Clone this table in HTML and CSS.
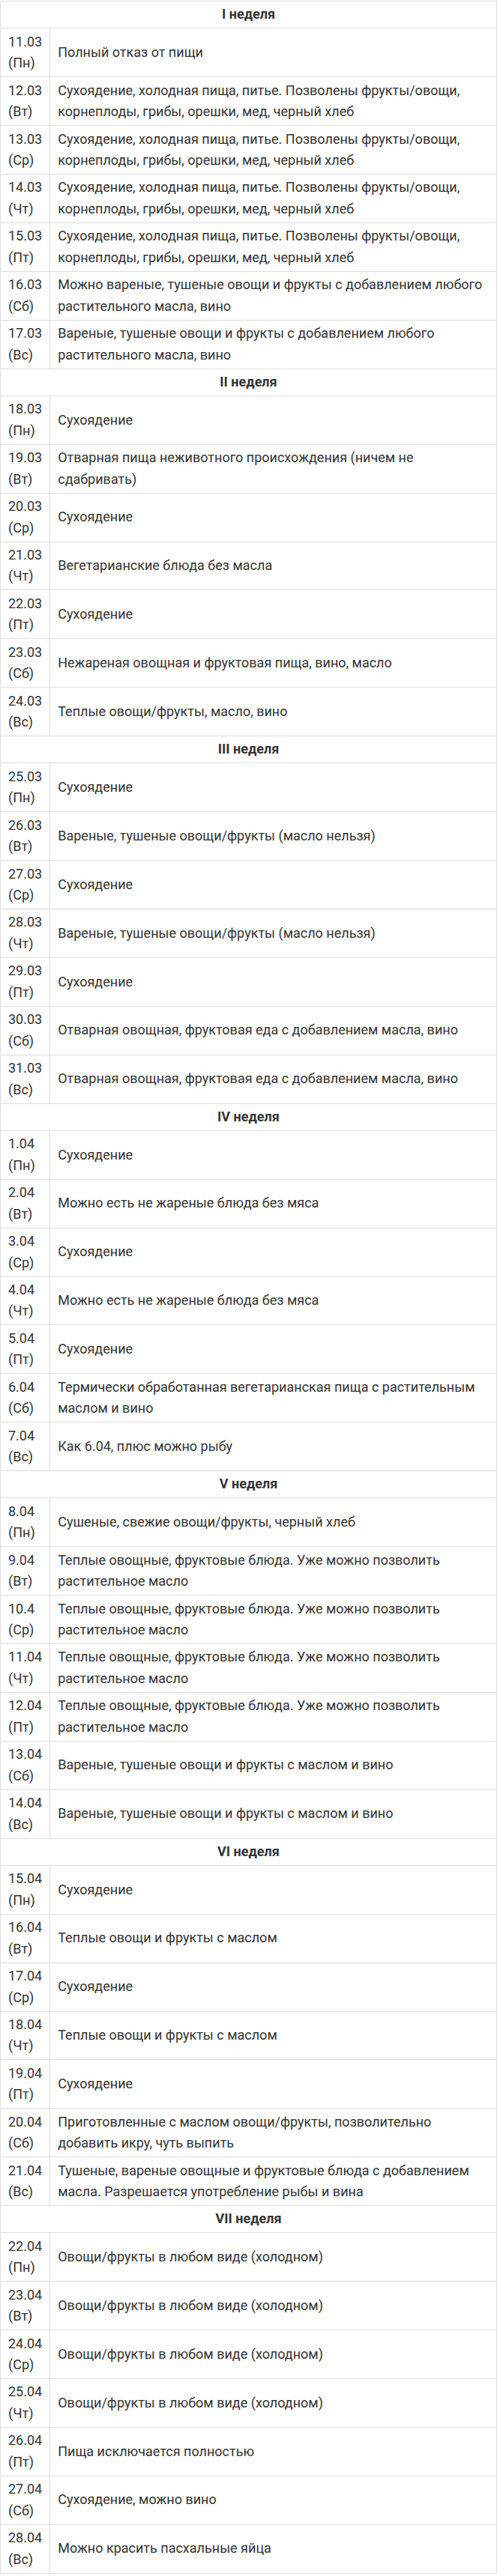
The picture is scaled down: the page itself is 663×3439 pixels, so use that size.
FILE: index.html
```html
<!DOCTYPE html>
<html lang="ru">
<head>
<meta charset="utf-8">
<title>Календарь питания</title>
<link rel="stylesheet" href="styles.css">
</head>
<body>
<table class="diet">
<tbody>
<tr class="week"><th colspan="2">I неделя</th></tr>
<tr><td class="date">11.03<br>(Пн)</td><td class="text">Полный отказ от пищи</td></tr>
<tr><td class="date">12.03<br>(Вт)</td><td class="text">Сухоядение, холодная пища, питье. Позволены фрукты/овощи, корнеплоды, грибы, орешки, мед, черный хлеб</td></tr>
<tr><td class="date">13.03<br>(Ср)</td><td class="text">Сухоядение, холодная пища, питье. Позволены фрукты/овощи, корнеплоды, грибы, орешки, мед, черный хлеб</td></tr>
<tr><td class="date">14.03<br>(Чт)</td><td class="text">Сухоядение, холодная пища, питье. Позволены фрукты/овощи, корнеплоды, грибы, орешки, мед, черный хлеб</td></tr>
<tr><td class="date">15.03<br>(Пт)</td><td class="text">Сухоядение, холодная пища, питье. Позволены фрукты/овощи, корнеплоды, грибы, орешки, мед, черный хлеб</td></tr>
<tr><td class="date">16.03<br>(Сб)</td><td class="text">Можно вареные, тушеные овощи и фрукты с добавлением любого растительного масла, вино</td></tr>
<tr><td class="date">17.03<br>(Вс)</td><td class="text">Вареные, тушеные овощи и фрукты с добавлением любого растительного масла, вино</td></tr>

<tr class="week"><th colspan="2">II неделя</th></tr>
<tr><td class="date">18.03<br>(Пн)</td><td class="text">Сухоядение</td></tr>
<tr><td class="date">19.03<br>(Вт)</td><td class="text">Отварная пища неживотного происхождения (ничем не сдабривать)</td></tr>
<tr><td class="date">20.03<br>(Ср)</td><td class="text">Сухоядение</td></tr>
<tr><td class="date">21.03<br>(Чт)</td><td class="text">Вегетарианские блюда без масла</td></tr>
<tr><td class="date">22.03<br>(Пт)</td><td class="text">Сухоядение</td></tr>
<tr><td class="date">23.03<br>(Сб)</td><td class="text">Нежареная овощная и фруктовая пища, вино, масло</td></tr>
<tr><td class="date">24.03<br>(Вс)</td><td class="text">Теплые овощи/фрукты, масло, вино</td></tr>

<tr class="week"><th colspan="2">III неделя</th></tr>
<tr><td class="date">25.03<br>(Пн)</td><td class="text">Сухоядение</td></tr>
<tr><td class="date">26.03<br>(Вт)</td><td class="text">Вареные, тушеные овощи/фрукты (масло нельзя)</td></tr>
<tr><td class="date">27.03<br>(Ср)</td><td class="text">Сухоядение</td></tr>
<tr><td class="date">28.03<br>(Чт)</td><td class="text">Вареные, тушеные овощи/фрукты (масло нельзя)</td></tr>
<tr><td class="date">29.03<br>(Пт)</td><td class="text">Сухоядение</td></tr>
<tr><td class="date">30.03<br>(Сб)</td><td class="text">Отварная овощная, фруктовая еда с добавлением масла, вино</td></tr>
<tr><td class="date">31.03<br>(Вс)</td><td class="text">Отварная овощная, фруктовая еда с добавлением масла, вино</td></tr>

<tr class="week"><th colspan="2">IV неделя</th></tr>
<tr><td class="date">1.04<br>(Пн)</td><td class="text">Сухоядение</td></tr>
<tr><td class="date">2.04<br>(Вт)</td><td class="text">Можно есть не жареные блюда без мяса</td></tr>
<tr><td class="date">3.04<br>(Ср)</td><td class="text">Сухоядение</td></tr>
<tr><td class="date">4.04<br>(Чт)</td><td class="text">Можно есть не жареные блюда без мяса</td></tr>
<tr><td class="date">5.04<br>(Пт)</td><td class="text">Сухоядение</td></tr>
<tr><td class="date">6.04<br>(Сб)</td><td class="text">Термически обработанная вегетарианская пища с растительным маслом и вино</td></tr>
<tr><td class="date">7.04<br>(Вс)</td><td class="text">Как 6.04, плюс можно рыбу</td></tr>

<tr class="week"><th colspan="2">V неделя</th></tr>
<tr><td class="date">8.04<br>(Пн)</td><td class="text">Сушеные, свежие овощи/фрукты, черный хлеб</td></tr>
<tr><td class="date">9.04<br>(Вт)</td><td class="text">Теплые овощные, фруктовые блюда. Уже можно позволить растительное масло</td></tr>
<tr><td class="date">10.4<br>(Ср)</td><td class="text">Теплые овощные, фруктовые блюда. Уже можно позволить растительное масло</td></tr>
<tr><td class="date">11.04<br>(Чт)</td><td class="text">Теплые овощные, фруктовые блюда. Уже можно позволить растительное масло</td></tr>
<tr><td class="date">12.04<br>(Пт)</td><td class="text">Теплые овощные, фруктовые блюда. Уже можно позволить растительное масло</td></tr>
<tr><td class="date">13.04<br>(Сб)</td><td class="text">Вареные, тушеные овощи и фрукты с маслом и вино</td></tr>
<tr><td class="date">14.04<br>(Вс)</td><td class="text">Вареные, тушеные овощи и фрукты с маслом и вино</td></tr>

<tr class="week"><th colspan="2">VI неделя</th></tr>
<tr><td class="date">15.04<br>(Пн)</td><td class="text">Сухоядение</td></tr>
<tr><td class="date">16.04<br>(Вт)</td><td class="text">Теплые овощи и фрукты с маслом</td></tr>
<tr><td class="date">17.04<br>(Ср)</td><td class="text">Сухоядение</td></tr>
<tr><td class="date">18.04<br>(Чт)</td><td class="text">Теплые овощи и фрукты с маслом</td></tr>
<tr><td class="date">19.04<br>(Пт)</td><td class="text">Сухоядение</td></tr>
<tr><td class="date">20.04<br>(Сб)</td><td class="text">Приготовленные с маслом овощи/фрукты, позволительно добавить икру, чуть выпить</td></tr>
<tr><td class="date">21.04<br>(Вс)</td><td class="text">Тушеные, вареные овощные и фруктовые блюда с добавлением масла. Разрешается употребление рыбы и вина</td></tr>

<tr class="week"><th colspan="2">VII неделя</th></tr>
<tr><td class="date">22.04<br>(Пн)</td><td class="text">Овощи/фрукты в любом виде (холодном)</td></tr>
<tr><td class="date">23.04<br>(Вт)</td><td class="text">Овощи/фрукты в любом виде (холодном)</td></tr>
<tr><td class="date">24.04<br>(Ср)</td><td class="text">Овощи/фрукты в любом виде (холодном)</td></tr>
<tr><td class="date">25.04<br>(Чт)</td><td class="text">Овощи/фрукты в любом виде (холодном)</td></tr>
<tr><td class="date">26.04<br>(Пт)</td><td class="text">Пища исключается полностью</td></tr>
<tr><td class="date">27.04<br>(Сб)</td><td class="text">Сухоядение, можно вино</td></tr>
<tr><td class="date">28.04<br>(Вс)</td><td class="text">Можно красить пасхальные яйца</td></tr>
</tbody>
</table>
</body>
</html>
```

FILE: styles.css
```css
html, body {
  margin: 0;
  padding: 0;
  background: #fff;
}

body {
  padding-top: 1px;
  font-family: Roboto, "Noto Sans", "Liberation Sans", sans-serif;
  font-size: 18px;
  line-height: 28.5px;
  color: #333;
}

.diet {
  width: 663px;
  border-collapse: collapse;
  border-spacing: 0;
}

.diet th,
.diet td {
  border: 1px solid #ddd;
  padding: 3.45px 10px;
  vertical-align: middle;
  text-align: left;
  font-weight: 400;
}

.diet .week th {
  text-align: center;
  font-weight: 700;
  color: #333;
}

.diet .date {
  width: 10%;
  white-space: nowrap;
}
```
